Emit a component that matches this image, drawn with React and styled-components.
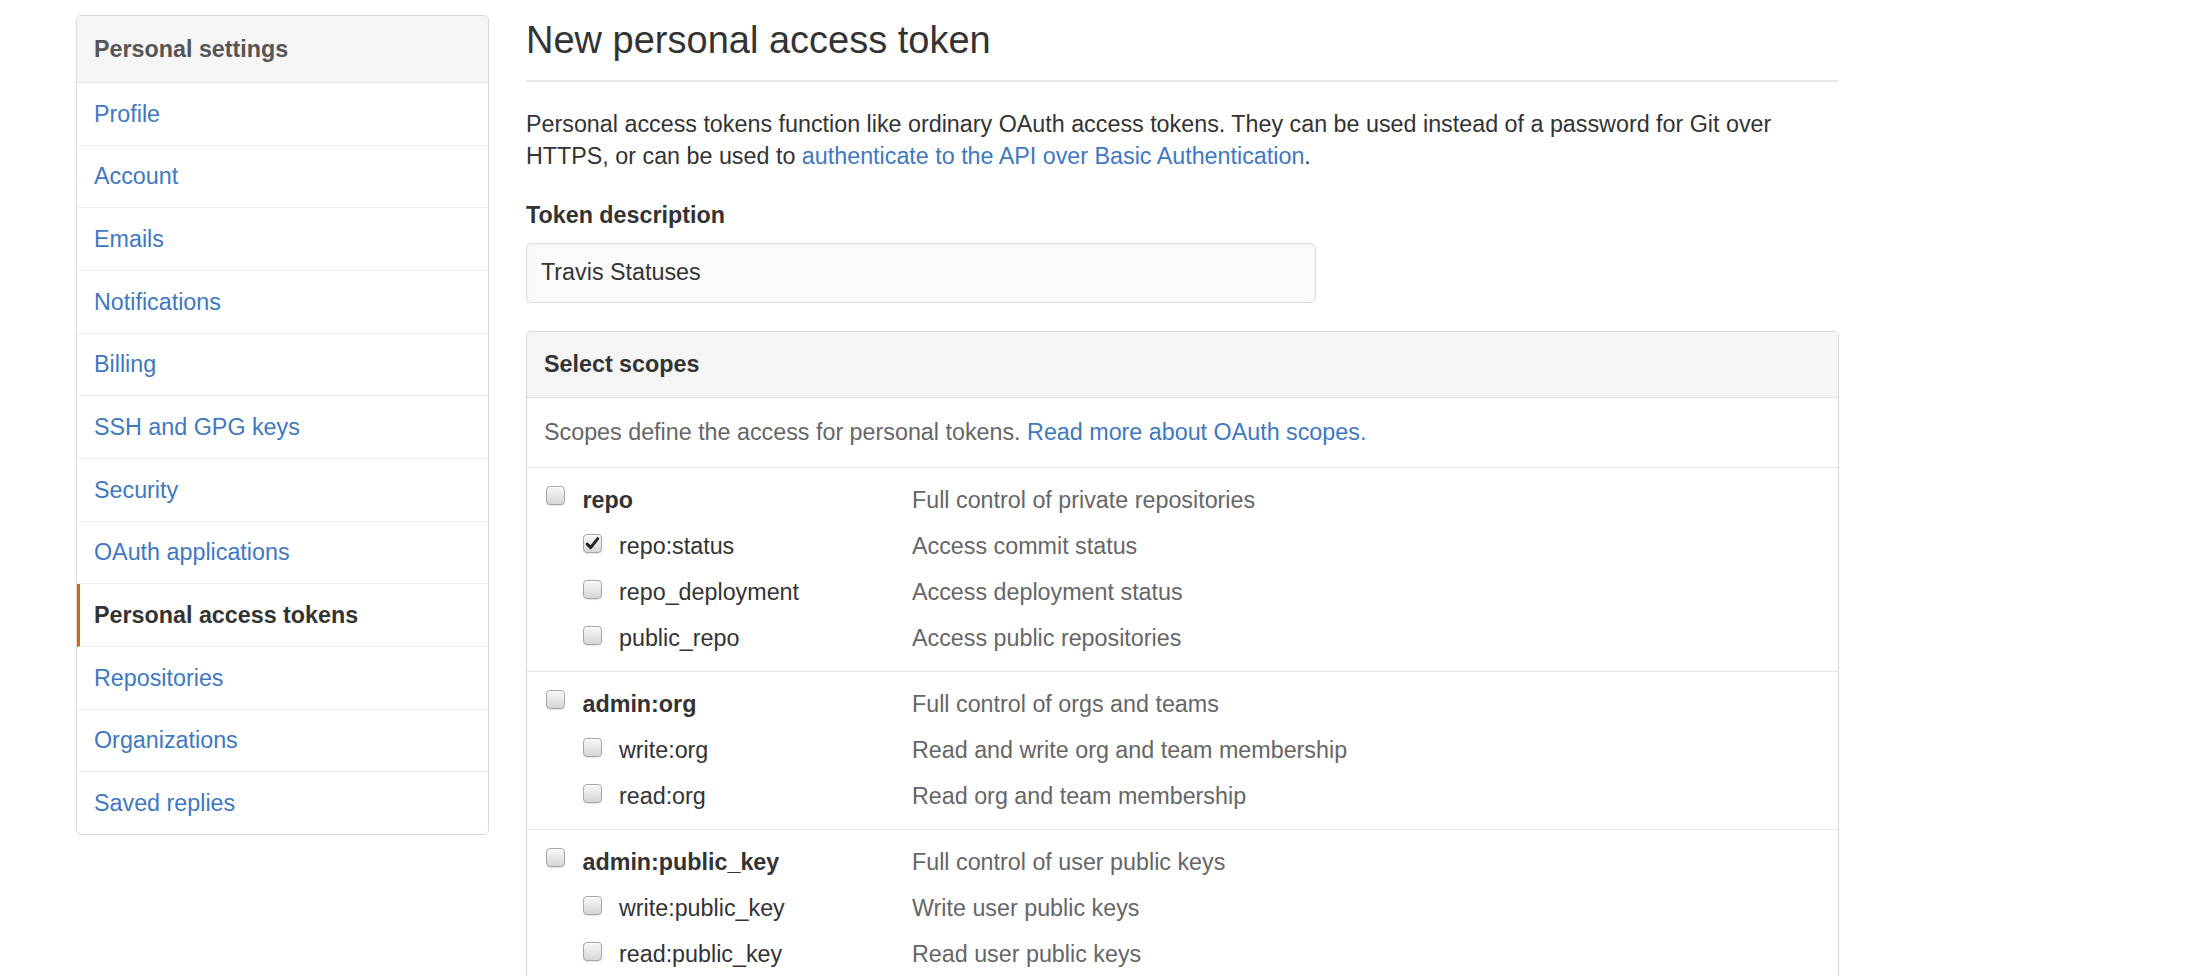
import React from 'react';
import styled, { createGlobalStyle } from 'styled-components';

const GlobalStyle = createGlobalStyle`
  html, body {
    margin: 0;
    padding: 0;
    background: #fff;
    overflow: hidden;
  }

  body {
    font-family: "Liberation Sans", Arial, sans-serif;
    font-size: 23.3px;
    line-height: 31.6px;
    color: #333;
  }
`;

const Page = styled.div`
  display: flex;
  align-items: flex-start;
  gap: 37px;
  padding: 15px 0 0 76px;
`;

const Sidebar = styled.nav`
  width: 413px;
  flex-shrink: 0;
  box-sizing: border-box;
  border: 1px solid #d8d8d8;
  border-radius: 5px;
  overflow: hidden;
`;

const SidebarHeader = styled.div`
  padding: 17px 17px;
  line-height: 32px;
  font-weight: bold;
  color: #555;
  background: #f5f5f5;
  border-bottom: 1px solid #e5e5e5;
`;

const MenuItem = styled.a`
  display: block;
  padding: 14.83px 17px;
  line-height: 32px;
  color: ${(props) => (props.$active ? '#333' : '#4078c0')};
  font-weight: ${(props) => (props.$active ? 'bold' : 'normal')};
  text-decoration: none;
  border-bottom: 1px solid #eee;
  border-left: ${(props) => (props.$active ? '3px solid #d26911' : '0')};
  padding-left: ${(props) => (props.$active ? '14px' : '17px')};

  &:last-child {
    border-bottom: 0;
  }
`;

const Main = styled.main`
  width: 1313px;
  flex-shrink: 0;
`;

const Heading = styled.h2`
  margin: 2px 0 0;
  padding-bottom: 15.5px;
  font-size: 38px;
  line-height: 47.5px;
  font-weight: normal;
  color: #333;
  border-bottom: 2px solid #e8e8e8;
`;

const Intro = styled.p`
  margin: 27px 0 0;
  max-width: 1300px;
  color: #333;
`;

const Link = styled.a`
  color: #4078c0;
  text-decoration: none;
`;

const FieldLabel = styled.label`
  display: block;
  margin-top: 27.4px;
  font-weight: bold;
  color: #333;
`;

const TextInput = styled.input`
  display: block;
  margin-top: 11.8px;
  width: 790px;
  height: 60px;
  box-sizing: border-box;
  padding: 0 14px;
  font-family: inherit;
  font-size: 23.3px;
  color: #333;
  background: #fafafa;
  border: 1.5px solid #dcdcdc;
  border-radius: 5px;
  box-shadow: inset 0 1px 3px rgba(0, 0, 0, 0.06);
  outline: none;
`;

const ScopesBox = styled.div`
  margin-top: 28px;
  border: 1.5px solid #d8d8d8;
  border-radius: 5px;
  overflow: hidden;
`;

const BoxHeader = styled.div`
  padding: 16.5px 17px;
  line-height: 32px;
  font-weight: bold;
  color: #333;
  background: #f5f5f5;
  border-bottom: 1.5px solid #e0e0e0;
`;

const BoxNote = styled.div`
  padding: 18.5px 17px;
  line-height: 32px;
  color: #666;
  border-bottom: 1.5px solid #e5e5e5;
`;

const Group = styled.div`
  display: flex;
  flex-direction: column;
  gap: 14px;
  padding: 16.5px 19px;
  border-bottom: 1.5px solid #e5e5e5;

  &:last-child {
    border-bottom: 0;
  }
`;

const ScopeRow = styled.div`
  display: grid;
  grid-template-columns: 366px 1fr;
  line-height: 32px;
`;

const ScopeName = styled.div`
  display: flex;
  align-items: flex-start;
  gap: 17.5px;
  padding-left: ${(props) => (props.$child ? '36.5px' : '0')};
  font-weight: ${(props) => (props.$child ? 'normal' : 'bold')};
  color: #333;
`;

const ScopeDesc = styled.div`
  color: #666;
`;

const Box = styled.span`
  flex-shrink: 0;
  display: flex;
  align-items: center;
  justify-content: center;
  width: 19px;
  height: 19px;
  margin-top: ${(props) => (props.$child ? '4px' : '2px')};
  box-sizing: border-box;
  border: 1px solid #a6a6a6;
  border-radius: 4px;
  background: linear-gradient(#f8f8f8, #d6d6d6);
  box-shadow: inset 0 1px 0 #fff, 0 1px 1px rgba(0, 0, 0, 0.1);
`;

const Checkbox = ({ checked, child }) => (
  <Box $child={child}>
    {checked && (
      <svg width="15" height="15" viewBox="0 0 14 14">
        <path
          d="M2 7.6 L5.3 10.8 L11.9 2.4"
          fill="none"
          stroke="#262626"
          strokeWidth="2.8"
          strokeLinecap="round"
          strokeLinejoin="round"
        />
      </svg>
    )}
  </Box>
);

const menu = [
  'Profile',
  'Account',
  'Emails',
  'Notifications',
  'Billing',
  'SSH and GPG keys',
  'Security',
  'OAuth applications',
  'Personal access tokens',
  'Repositories',
  'Organizations',
  'Saved replies',
];

const scopes = [
  {
    name: 'repo',
    desc: 'Full control of private repositories',
    children: [
      { name: 'repo:status', desc: 'Access commit status', checked: true },
      { name: 'repo_deployment', desc: 'Access deployment status' },
      { name: 'public_repo', desc: 'Access public repositories' },
    ],
  },
  {
    name: 'admin:org',
    desc: 'Full control of orgs and teams',
    children: [
      { name: 'write:org', desc: 'Read and write org and team membership' },
      { name: 'read:org', desc: 'Read org and team membership' },
    ],
  },
  {
    name: 'admin:public_key',
    desc: 'Full control of user public keys',
    children: [
      { name: 'write:public_key', desc: 'Write user public keys' },
      { name: 'read:public_key', desc: 'Read user public keys' },
    ],
  },
];

const App = () => {
  return (
    <>
      <GlobalStyle />
      <Page>
        <Sidebar>
          <SidebarHeader>Personal settings</SidebarHeader>
          {menu.map((item) => (
            <MenuItem key={item} $active={item === 'Personal access tokens'}>
              {item}
            </MenuItem>
          ))}
        </Sidebar>

        <Main>
          <Heading>New personal access token</Heading>
          <Intro>
            Personal access tokens function like ordinary OAuth access tokens.
            They can be used instead of a password for Git over HTTPS, or can be
            used to{' '}
            <Link>authenticate to the API over Basic Authentication</Link>.
          </Intro>

          <FieldLabel>Token description</FieldLabel>
          <TextInput type="text" defaultValue="Travis Statuses" />

          <ScopesBox>
            <BoxHeader>Select scopes</BoxHeader>
            <BoxNote>
              Scopes define the access for personal tokens.{' '}
              <Link>Read more about OAuth scopes.</Link>
            </BoxNote>
            {scopes.map((scope) => (
              <Group key={scope.name}>
                <ScopeRow>
                  <ScopeName>
                    <Checkbox />
                    {scope.name}
                  </ScopeName>
                  <ScopeDesc>{scope.desc}</ScopeDesc>
                </ScopeRow>
                {scope.children.map((sub) => (
                  <ScopeRow key={sub.name}>
                    <ScopeName $child>
                      <Checkbox child checked={sub.checked} />
                      {sub.name}
                    </ScopeName>
                    <ScopeDesc>{sub.desc}</ScopeDesc>
                  </ScopeRow>
                ))}
              </Group>
            ))}
          </ScopesBox>
        </Main>
      </Page>
    </>
  );
};

export default App;
